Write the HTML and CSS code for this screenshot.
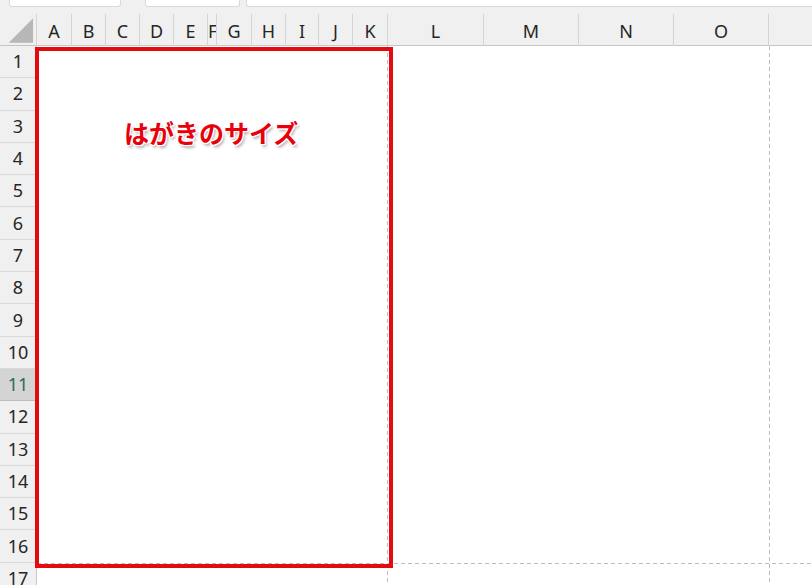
FILE: index.html
```html
<!DOCTYPE html>
<html lang="ja">
<head>
<meta charset="utf-8">
<title>はがきのサイズ</title>
<link rel="stylesheet" href="styles.css">
</head>
<body>
<div class="app">
  <div class="topbar">
    <div class="box namebox"></div>
    <div class="box fxbox"></div>
    <div class="box formula"></div>
  </div>
  <div class="colheads">
    <div class="corner">
      <svg width="37" height="32" viewBox="0 0 37 32"><polygon points="9,29 34,29 34,4" fill="#b7b7b7"/></svg>
    </div>
    <div class="ch">A</div>
    <div class="ch">B</div>
    <div class="ch">C</div>
    <div class="ch">D</div>
    <div class="ch">E</div>
    <div class="ch narrow">F</div>
    <div class="ch">G</div>
    <div class="ch">H</div>
    <div class="ch">I</div>
    <div class="ch">J</div>
    <div class="ch">K</div>
    <div class="ch">L</div>
    <div class="ch">M</div>
    <div class="ch">N</div>
    <div class="ch">O</div>
    <div class="ch last"></div>
  </div>
  <div class="sheet">
    <div class="rowheads">
      <div class="rh">1</div>
      <div class="rh">2</div>
      <div class="rh">3</div>
      <div class="rh">4</div>
      <div class="rh">5</div>
      <div class="rh">6</div>
      <div class="rh">7</div>
      <div class="rh">8</div>
      <div class="rh">9</div>
      <div class="rh">10</div>
      <div class="rh active">11</div>
      <div class="rh">12</div>
      <div class="rh">13</div>
      <div class="rh">14</div>
      <div class="rh">15</div>
      <div class="rh">16</div>
      <div class="rh">17</div>
    </div>
    <div class="cells"></div>
  </div>

  <div class="pb pb-v1"></div>
  <div class="pb pb-v2"></div>
  <div class="pb pb-h"></div>
  <div class="redbox"></div>
  <div class="label">はがきのサイズ</div>
</div>
</body>
</html>
```
FILE: styles.css
```css
html, body {
  margin: 0;
  padding: 0;
}
body {
  width: 812px;
  height: 585px;
  overflow: hidden;
  background: #ffffff;
  font-family: "Noto Sans", "Noto Sans CJK JP", sans-serif;
}
.app {
  position: relative;
  width: 812px;
  height: 585px;
  overflow: hidden;
}
.topbar {
  height: 14px;
  background: #f0f0f0;
  display: flex;
  align-items: flex-start;
  box-sizing: border-box;
}
.box {
  height: 7px;
  background: #ffffff;
  border: 1px solid #d9d9d9;
  border-top: none;
  box-sizing: border-box;
  border-radius: 0 0 3px 3px;
}
.namebox {
  margin-left: 9px;
  width: 112px;
}
.fxbox {
  margin-left: 24px;
  width: 95px;
}
.formula {
  margin-left: 6px;
  flex: 1;
  border-right: none;
  border-radius: 0 0 0 3px;
}
.colheads {
  display: grid;
  grid-template-columns: 37px 35px 34px 34px 34px 34px 9px 35px 34px 33px 34px 35px 96px 95px 95px 95px 1fr;
  height: 32px;
  background: #f0f0f0;
  border-bottom: 1px solid #c6c6c6;
  box-sizing: border-box;
}
.corner {
  border-right: 1px solid #d4d4d4;
  display: flex;
}
.ch {
  border-right: 1px solid #d4d4d4;
  font-size: 18px;
  color: #262626;
  display: flex;
  align-items: center;
  justify-content: center;
  overflow: hidden;
  line-height: 1;
  padding-top: 1px;
}
.ch.narrow {
  justify-content: flex-start;
  padding-left: 0;
}
.ch.last {
  border-right: none;
}
.sheet {
  display: grid;
  grid-template-columns: 37px 1fr;
}
.rowheads {
  display: flex;
  flex-direction: column;
  background: #f0f0f0;
  border-right: 1px solid #c6c6c6;
}
.rh {
  height: 32.3px;
  box-sizing: border-box;
  border-bottom: 1px solid #d9d9d9;
  font-size: 18px;
  line-height: 1;
  color: #262626;
  display: flex;
  align-items: center;
  justify-content: center;
  flex: none;
  padding-bottom: 1px;
}
.rh.active {
  background: #d4d4d4;
  color: #2d6b5a;
  border-bottom-color: #bdbdbd;
}
.cells {
  background: #ffffff;
}
.pb {
  position: absolute;
}
.pb-v1 {
  left: 387px;
  top: 46px;
  width: 1px;
  height: 539px;
  background: repeating-linear-gradient(to bottom, #bdbdbd 0 4px, transparent 4px 7px);
}
.pb-v2 {
  left: 769px;
  top: 46px;
  width: 1px;
  height: 539px;
  background: repeating-linear-gradient(to bottom, #bdbdbd 0 4px, transparent 4px 7px);
}
.pb-h {
  left: 37px;
  top: 563px;
  width: 775px;
  height: 1px;
  background: repeating-linear-gradient(to right, #bdbdbd 0 4px, transparent 4px 7px);
}
.redbox {
  position: absolute;
  left: 35px;
  top: 47px;
  width: 358px;
  height: 521px;
  box-sizing: border-box;
  border: 4px solid #e30b0f;
}
.label {
  position: absolute;
  left: 124px;
  top: 118px;
  font-family: "Noto Sans CJK JP", sans-serif;
  font-weight: 700;
  font-size: 25px;
  line-height: 28px;
  letter-spacing: 0;
  color: #e8000b;
  text-shadow: 1px 0 0 #fff, -1px 0 0 #fff, 0 1px 0 #fff, 0 -1px 0 #fff, 1px 1px 0 #fff, -1px -1px 0 #fff, 1px -1px 0 #fff, -1px 1px 0 #fff, 2px 3px 3px rgba(0,0,0,0.3);
}
```
